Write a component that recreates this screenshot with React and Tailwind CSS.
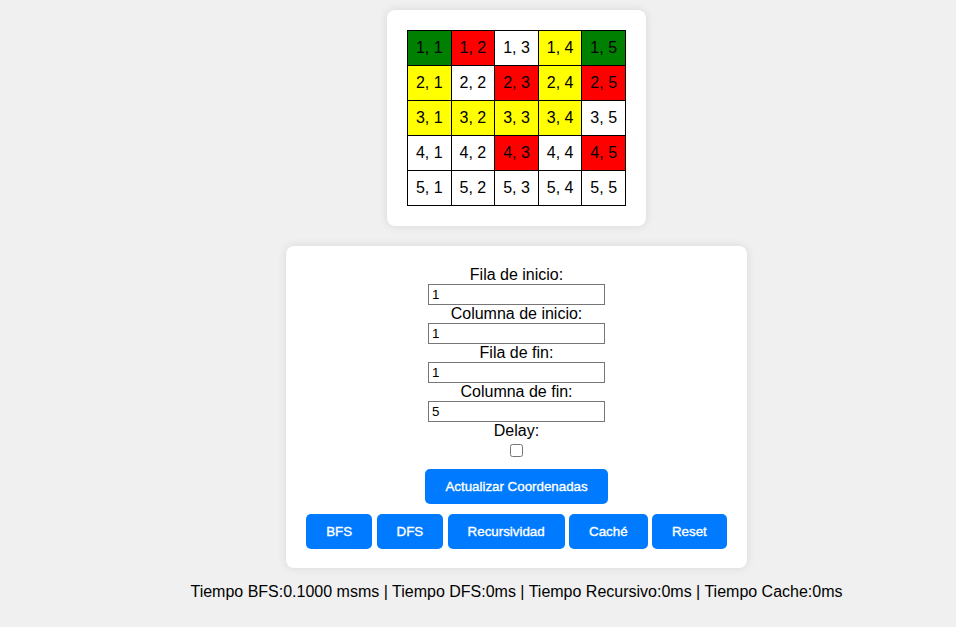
import React from 'react';

const cellColors = {
  g: 'bg-[#008000]',
  r: 'bg-[#ff0000]',
  y: 'bg-[#ffff00]',
  w: 'bg-white',
};

const board = [
  ['g', 'r', 'w', 'y', 'g'],
  ['y', 'w', 'r', 'y', 'r'],
  ['y', 'y', 'y', 'y', 'w'],
  ['w', 'w', 'r', 'w', 'r'],
  ['w', 'w', 'w', 'w', 'w'],
];

const fields = [
  { label: 'Fila de inicio:', value: '1' },
  { label: 'Columna de inicio:', value: '1' },
  { label: 'Fila de fin:', value: '1' },
  { label: 'Columna de fin:', value: '5' },
];

const actions = ['BFS', 'DFS', 'Recursividad', 'Caché', 'Reset'];

function Button({ children }) {
  return (
    <button className="h-[35px] px-[20px] rounded-[5px] bg-[#007bff] text-white text-[13.33px] leading-[15px] [-webkit-text-stroke:0.35px_white]">
      {children}
    </button>
  );
}

export default function App() {
  return (
    <div className="min-h-screen w-full bg-[#f0f0f0] text-black text-[16px] font-['Liberation_Sans',Arial,sans-serif] flex flex-col items-center pl-[77px] pt-[10px]">
      {/* Board */}
      <div className="bg-white rounded-[8px] shadow-[0_0_10px_rgba(0,0,0,0.1)] p-[20px]">
        <div className="w-[219px] grid grid-cols-5 border-l border-t border-black">
          {board.map((row, i) =>
            row.map((c, j) => (
              <div
                key={`${i}-${j}`}
                className={`h-[35px] border-r border-b border-black flex items-center justify-center leading-[18px] ${cellColors[c]}`}
              >
                {i + 1}, {j + 1}
              </div>
            ))
          )}
        </div>
      </div>

      {/* Controls */}
      <div className="mt-[20px] w-[461px] bg-white rounded-[8px] shadow-[0_0_10px_rgba(0,0,0,0.1)] pt-[20px] pb-[19px] flex flex-col items-center">
        {fields.map((f) => (
          <React.Fragment key={f.label}>
            <label className="h-[18px] leading-[18px]">{f.label}</label>
            <input
              type="text"
              defaultValue={f.value}
              className="w-[177px] h-[21px] border border-[#767676] bg-white px-[3px] text-[13.33px] leading-[15px] outline-none"
            />
          </React.Fragment>
        ))}
        <label className="h-[18px] leading-[18px]">Delay:</label>
        <input type="checkbox" className="mt-[4px] w-[13px] h-[13px]" />

        <div className="mt-[12px]">
          <Button>Actualizar Coordenadas</Button>
        </div>
        <div className="mt-[10px] flex gap-[4.4px]">
          {actions.map((a) => (
            <Button key={a}>{a}</Button>
          ))}
        </div>
      </div>

      <p className="mt-[15px] leading-[18px]">
        Tiempo BFS:0.1000 msms | Tiempo DFS:0ms | Tiempo Recursivo:0ms | Tiempo Cache:0ms
      </p>
    </div>
  );
}
